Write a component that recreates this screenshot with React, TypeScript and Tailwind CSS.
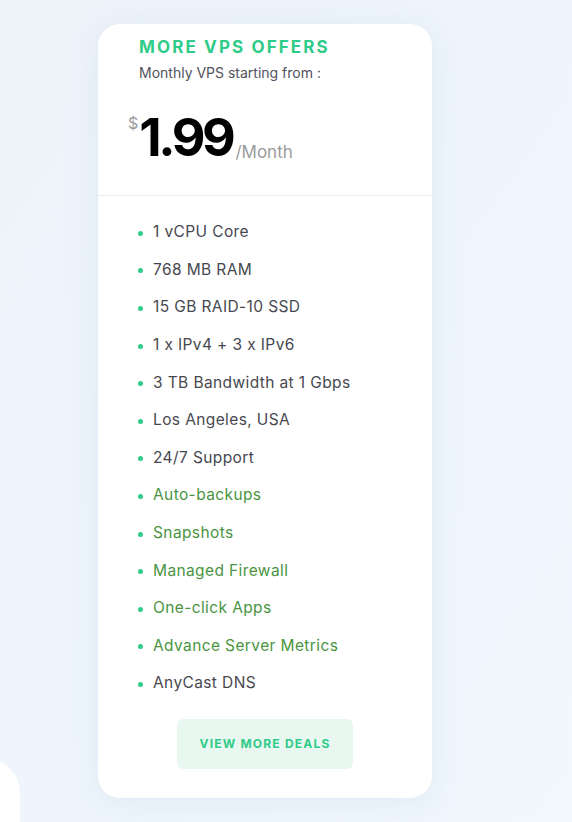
import React from "react";

const items: { text: string; green?: boolean }[] = [
  { text: "1 vCPU Core" },
  { text: "768 MB RAM" },
  { text: "15 GB RAID-10 SSD" },
  { text: "1 x IPv4 + 3 x IPv6" },
  { text: "3 TB Bandwidth at 1 Gbps" },
  { text: "Los Angeles, USA" },
  { text: "24/7 Support" },
  { text: "Auto-backups", green: true },
  { text: "Snapshots", green: true },
  { text: "Managed Firewall", green: true },
  { text: "One-click Apps", green: true },
  { text: "Advance Server Metrics", green: true },
  { text: "AnyCast DNS" },
];

export default function App() {
  return (
    <div
      className="relative w-[572px] h-[822px] overflow-hidden bg-gradient-to-br from-[#edf3f9] via-[#eef5fc] to-[#f0f7fd]"
      style={{ fontFamily: "Inter, 'Noto Sans', sans-serif" }}
    >
      <div className="absolute left-[-50px] top-[758px] w-[70px] h-[120px] rounded-[40px] bg-white" />
      <div className="relative flex justify-start pt-[24px] pl-[98px]">
        <div className="w-[334px] h-[774px] bg-white rounded-[22px] shadow-[0_4px_30px_rgba(180,200,220,0.25)] flex flex-col">
          <div className="pl-[41px] pt-[12px] h-[171px] flex flex-col">
            <div className="text-[17px] leading-[22px] font-bold tracking-[0.125em] text-[#2fcb88]">
              MORE VPS OFFERS
            </div>
            <div className="mt-[6px] text-[14px] leading-[18px] text-[#51525c]">
              Monthly VPS starting from :
            </div>
            <div className="mt-[34px] flex items-end ml-[-11px]">
              <span className="self-start text-[16px] leading-none text-[#9a9a9a] mt-[-1px]">$</span>
              <span className="ml-[1px] text-[52px] leading-[44px] font-bold tracking-[-0.065em] text-black">1.99</span>
              <span className="ml-[3px] text-[17px] leading-none text-[#9b9b9b] mb-[-1px]">/Month</span>
            </div>
          </div>
          <div className="h-px bg-[#ececec]" />
          <ul className="pl-[40px] pt-[17px] flex flex-col">
            {items.map((it) => (
              <li key={it.text} className="h-[37.6px] flex items-center">
                <span className="w-[5px] h-[5px] rounded-full bg-[#2fcb88] mt-[3px]" />
                <span
                  className={
                    "ml-[10px] text-[15.5px] tracking-[0.025em] " +
                    (it.green ? "text-[#4a9442]" : "text-[#47484f]")
                  }
                >
                  {it.text}
                </span>
              </li>
            ))}
          </ul>
          <div className="flex justify-center mt-[17px]">
            <div className="w-[176px] h-[50px] rounded-[6px] bg-[#e8f8f0] flex items-center justify-center text-[12px] font-bold tracking-[0.1em] text-[#2fcb88]">
              VIEW MORE DEALS
            </div>
          </div>
        </div>
      </div>
    </div>
  );
}
